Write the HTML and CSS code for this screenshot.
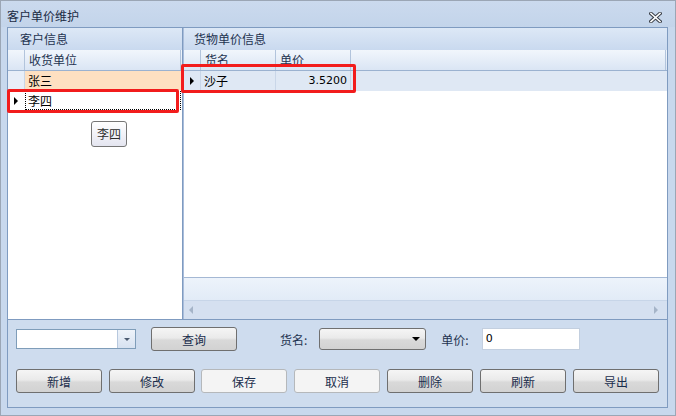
FILE: index.html
```html
<!DOCTYPE html>
<html>
<head>
    <meta charset="utf-8">
    <link rel="stylesheet" href="styles.css">
</head>
<body>
    <div class="window">
        <div class="titlebar">
            <span class="title">客户单价维护</span>
            <svg class="close" width="13" height="11" viewBox="0 0 13 11">
                <path d="M2 1.5 L11 9.5 M11 1.5 L2 9.5" stroke="#3a3f48" stroke-width="3.6" stroke-linecap="square" fill="none"/>
                <path d="M2 1.5 L11 9.5 M11 1.5 L2 9.5" stroke="#ffffff" stroke-width="1.6" stroke-linecap="square" fill="none"/>
            </svg>
        </div>
        <div class="frame">
            <div class="panels">
                <div class="panel panel-left">
                    <div class="panel-head">客户信息</div>
                    <div class="grid-head">
                        <div class="rh"></div>
                        <div class="hcell col-unit">收货单位</div>
                    </div>
                    <div class="row row-alt">
                        <div class="rh"></div>
                        <div class="cell col-unit">张三</div>
                    </div>
                    <div class="row row-current">
                        <div class="rh"><span class="arrow"></span></div>
                        <div class="cell col-unit focus">李四</div>
                    </div>
                    <div class="grid-body"></div>
                </div>
                <div class="splitter"></div>
                <div class="panel panel-right">
                    <div class="panel-head">货物单价信息</div>
                    <div class="grid-head">
                        <div class="rh"></div>
                        <div class="hcell col-name">货名</div>
                        <div class="hcell col-price">单价</div>
                        <div class="hcell col-fill"></div>
                    </div>
                    <div class="row row-sel">
                        <div class="rh"><span class="arrow"></span></div>
                        <div class="cell col-name">沙子</div>
                        <div class="cell col-price num">3.5200</div>
                    </div>
                    <div class="grid-body"></div>
                    <div class="grid-foot"></div>
                    <div class="hscroll">
                        <span class="sarrow sarrow-left"></span>
                        <span class="sarrow sarrow-right"></span>
                    </div>
                </div>
            </div>
            <div class="toolbar">
                <div class="tool-row">
                    <div class="combo">
                        <div class="combo-text"></div>
                        <div class="combo-btn"><span class="down"></span></div>
                    </div>
                    <button class="btn btn-query">查询</button>
                    <span class="label label-name">货名:</span>
                    <div class="select"><span class="down dark"></span></div>
                    <span class="label label-price">单价:</span>
                    <div class="textbox">0</div>
                </div>
                <div class="tool-row buttons">
                    <button class="btn">新增</button>
                    <button class="btn">修改</button>
                    <button class="btn disabled btn-save">保存</button>
                    <button class="btn disabled">取消</button>
                    <button class="btn">删除</button>
                    <button class="btn">刷新</button>
                    <button class="btn">导出</button>
                </div>
            </div>
        </div>

        <div class="tip">李四</div>
        <div class="mark mark-customer"></div>
        <div class="mark mark-goods"></div>
    </div>
</body>
</html>
```

FILE: styles.css
```css
body {
    margin: 0;
    background: #ffffff;
}
.window {
    position: relative;
    width: 676px;
    height: 416px;
    box-sizing: border-box;
    border: 1px solid #9ba6b5;
    background: #c8d8ed;
    display: flex;
    flex-direction: column;
    font-family: "Noto Sans CJK SC", "Liberation Sans", sans-serif;
    font-size: 12px;
    color: #1e3350;
}
.titlebar {
    height: 26px;
    flex: none;
    display: flex;
    align-items: center;
    justify-content: space-between;
    padding: 2px 13px 0 6px;
    box-sizing: border-box;
    background: linear-gradient(#cbdaee, #c3d4ea);
}
.title {
    color: #1b2b44;
}
.close {
    display: block;
    margin-top: 4px;
}
.frame {
    flex: 1;
    margin: 0 7px 7px 6px;
    border: 1px solid #7f9bc0;
    display: flex;
    flex-direction: column;
    min-height: 0;
}
.panels {
    height: 291px;
    flex: none;
    display: flex;
    border-bottom: 1px solid #7f9bc0;
}
.panel {
    display: flex;
    flex-direction: column;
    background: #ffffff;
}
.panel-left {
    width: 174px;
}
.panel-right {
    flex: 1;
}
.splitter {
    width: 0;
    border-left: 1px solid #7f9bc0;
    border-right: 1px solid #a9bddb;
}
.panel-head {
    height: 22px;
    flex: none;
    line-height: 22px;
    padding-left: 12px;
    background: linear-gradient(#dde8f6, #c9d9ef);
    color: #1e3350;
}
.panel-right .panel-head {
    padding-left: 10px;
}
.grid-head {
    height: 20px;
    flex: none;
    display: flex;
    background: linear-gradient(#f1f6fc, #dae5f4);
    border-bottom: 1px solid #9bb2d0;
}
.rh {
    width: 16px;
    flex: none;
    border-right: 1px solid #b2c4dc;
    display: flex;
    align-items: center;
    justify-content: center;
}
.hcell {
    box-sizing: border-box;
    line-height: 20px;
    padding-left: 4px;
    border-right: 1px solid #b2c4dc;
    color: #1e3350;
}
.row {
    height: 19px;
    flex: none;
    display: flex;
    border-bottom: 1px solid #ffffff;
}
.cell {
    box-sizing: border-box;
    line-height: 19px;
    padding-left: 3px;
    color: #000000;
}
.col-unit {
    width: 156px;
}
.col-name {
    width: 75px;
}
.col-price {
    width: 75px;
}
.col-fill {
    flex: 1;
    margin-right: 1px;
}
.row-alt {
    background: #fee0c1;
}
.row-alt .rh {
    background: #e8eef8;
    border-right-color: #c9d6e8;
}
.row-current .rh {
    border-right-color: #ffffff;
}
.focus {
    border: 1px dotted #000000;
    line-height: 17px;
    padding-left: 2px;
}
.row-sel {
    height: 20px;
    background: #dfe8f4;
}
.row-sel .cell {
    line-height: 20px;
    border-right: 1px solid #c9d6e8;
}
.row-sel .rh {
    border-right-color: #c9d6e8;
}
.num {
    text-align: right;
    padding-right: 3px;
    font-family: "DejaVu Sans", sans-serif;
    font-size: 11px;
}
.arrow {
    width: 0;
    height: 0;
    border-top: 4px solid transparent;
    border-bottom: 4px solid transparent;
    border-left: 4px solid #000000;
}
.grid-body {
    flex: 1;
    background: #ffffff;
}
.grid-foot {
    height: 22px;
    flex: none;
    border-top: 1px solid #a4b8d4;
    background: linear-gradient(#edf3fb, #e2ebf7);
}
.hscroll {
    height: 18px;
    flex: none;
    border-top: 1px solid #c7d5e8;
    background: #d5e0f0;
    display: flex;
    align-items: center;
    justify-content: space-between;
    padding: 0 9px 0 5px;
}
.sarrow {
    width: 0;
    height: 0;
    border-top: 4px solid transparent;
    border-bottom: 4px solid transparent;
}
.sarrow-left {
    border-right: 4px solid #a5b4c8;
}
.sarrow-right {
    border-left: 4px solid #a5b4c8;
}
.toolbar {
    flex: 1;
    background: #cedcee;
    padding: 7px 0 0 8px;
}
.tool-row {
    display: flex;
    align-items: center;
    height: 24px;
}
.tool-row.buttons {
    margin-top: 18px;
    gap: 7px;
}
.combo {
    width: 120px;
    height: 20px;
    box-sizing: border-box;
    border: 1px solid #7f9db9;
    background: #ffffff;
    display: flex;
}
.combo-text {
    flex: 1;
}
.combo-btn {
    width: 17px;
    border-left: 1px solid #b7c8de;
    background: linear-gradient(#eef3fa, #d7e2f1);
    display: flex;
    align-items: center;
    justify-content: center;
}
.down {
    width: 0;
    height: 0;
    border-left: 3px solid transparent;
    border-right: 3px solid transparent;
    border-top: 3px solid #4a5a70;
}
.down.dark {
    border-left-width: 4px;
    border-right-width: 4px;
    border-top: 4px solid #000000;
}
.btn {
    width: 86px;
    height: 24px;
    box-sizing: border-box;
    border: 1px solid #6f6f6f;
    border-radius: 3px;
    background: linear-gradient(#f5f5f5 0%, #eaeaea 45%, #d9d9d9 55%, #d2d2d2 100%);
    font-family: "Noto Sans CJK SC", sans-serif;
    font-size: 12px;
    color: #1a2d4c;
    padding: 0;
}
.btn.disabled {
    border-color: #b5b8bb;
    background: #f4f4f4;
}
.btn-save {
    margin-left: -1px;
}
.btn-query {
    margin-left: 15px;
}
.label {
    color: #1e3350;
}
.label-name {
    margin-left: 43px;
}
.select {
    width: 107px;
    height: 22px;
    box-sizing: border-box;
    margin-left: 12px;
    border: 1px solid #707070;
    border-radius: 3px;
    background: linear-gradient(#f5f5f5 0%, #eaeaea 45%, #d9d9d9 55%, #d2d2d2 100%);
    display: flex;
    align-items: center;
    justify-content: flex-end;
    padding-right: 5px;
}
.label-price {
    margin-left: 15px;
}
.textbox {
    width: 98px;
    height: 22px;
    box-sizing: border-box;
    margin-left: 13px;
    border: 1px solid #c3cfdf;
    background: #ffffff;
    font-family: "DejaVu Sans", sans-serif;
    font-size: 11px;
    line-height: 20px;
    padding-left: 3px;
    color: #000000;
}
.tip {
    position: absolute;
    left: 90px;
    top: 120px;
    width: 36px;
    height: 26px;
    box-sizing: border-box;
    border: 1px solid #767676;
    border-radius: 3px;
    background: linear-gradient(#ffffff, #e4e5f0);
    line-height: 24px;
    text-align: center;
    color: #2b2b2b;
}
.mark {
    position: absolute;
    border: 3px solid #f21c1c;
    border-radius: 2px;
    box-sizing: border-box;
}
.mark-customer {
    left: 6px;
    top: 88px;
    width: 172px;
    height: 24px;
}
.mark-goods {
    left: 180px;
    top: 63px;
    width: 175px;
    height: 29px;
}
```
